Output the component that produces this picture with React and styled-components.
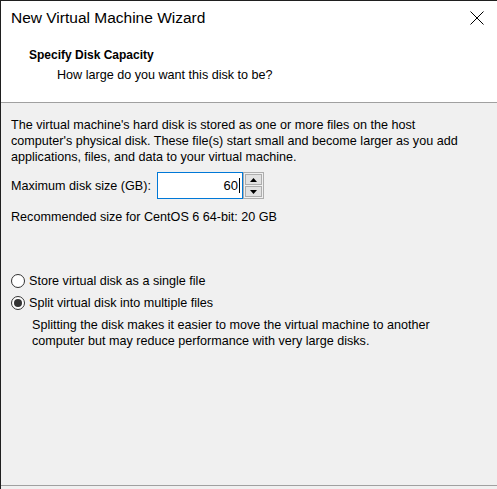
import React from "react";
import styled, { createGlobalStyle } from "styled-components";

const GlobalStyle = createGlobalStyle`
  html, body {
    margin: 0;
    padding: 0;
    background: #f0f0f0;
  }
  body {
    font-family: "Liberation Sans", Arial, sans-serif;
    font-size: 12.6px;
    color: #000;
  }
`;

const Window = styled.div`
  width: 497px;
  height: 489px;
  box-sizing: border-box;
  border-top: 1px solid #1f1f1f;
  border-left: 1px solid #1f1f1f;
  background: #f0f0f0;
  display: flex;
  flex-direction: column;
  overflow: hidden;
`;

const Top = styled.div`
  background: #ffffff;
  height: 101px;
  border-bottom: 1px solid #a0a0a0;
  display: flex;
  flex-direction: column;
`;

const TitleBar = styled.div`
  height: 34px;
  display: flex;
  align-items: center;
  justify-content: space-between;
  padding: 0 13px 0 10px;
`;

const Title = styled.span`
  font-size: 15.5px;
  color: #000;
`;

const Close = styled.svg`
  width: 14px;
  height: 14px;
  display: block;
`;

const Heading = styled.div`
  padding-left: 28px;
  margin-top: 12px;
  font-weight: bold;
  font-size: 12px;
  line-height: 16px;
`;

const SubHeading = styled.div`
  padding-left: 56px;
  margin-top: 4px;
  line-height: 16px;
`;

const Body = styled.div`
  flex: 1;
  padding: 14px 10px 0 10px;
  display: flex;
  flex-direction: column;
`;

const Paragraph = styled.p`
  margin: 0;
  line-height: 16px;
  white-space: nowrap;
  padding-left: ${(p) => p.$indent || 0}px;
  margin-top: ${(p) => p.$top || 0}px;
`;

const SizeRow = styled.div`
  display: flex;
  align-items: center;
  margin-top: 7px;
  height: 27px;
`;

const Label = styled.span`
  width: 146px;
  flex: none;
`;

const Input = styled.div`
  width: 86px;
  height: 27px;
  box-sizing: border-box;
  border: 1px solid #0078d7;
  background: #fff;
  display: flex;
  align-items: center;
  justify-content: flex-end;
  padding-right: 2px;
  font-size: 13px;
`;

const Caret = styled.span`
  width: 1px;
  height: 15px;
  background: #000;
  margin-left: 1px;
`;

const Spinner = styled.div`
  width: 21px;
  height: 27px;
  box-sizing: border-box;
  border: 1px solid #adadad;
  background: #f0f0f0;
  display: flex;
  flex-direction: column;
  padding: 1px;
  gap: 1px;
`;

const SpinButton = styled.div`
  flex: 1;
  background: #e1e1e1;
  border: 1px solid #adadad;
  display: flex;
  align-items: center;
  justify-content: center;
`;

const Radio = styled.label`
  display: flex;
  align-items: center;
  height: 16px;
  margin-top: ${(p) => p.$top}px;
  gap: 4px;
`;

const RadioCircle = styled.span`
  width: 14px;
  height: 14px;
  box-sizing: border-box;
  border-radius: 50%;
  border: 1px solid #333;
  background: #fff;
  display: flex;
  align-items: center;
  justify-content: center;
  flex: none;
  &::after {
    content: "";
    width: 8px;
    height: 8px;
    border-radius: 50%;
    background: #333;
    display: ${(p) => (p.$checked ? "block" : "none")};
  }
`;

const Footer = styled.div`
  height: 3px;
  border-top: 1px solid #a0a0a0;
  background: #f0f0f0;
`;

const Arrow = ({ up }) => (
  <svg width="7" height="4" viewBox="0 0 7 4">
    <polygon points={up ? "3.5,0 7,4 0,4" : "0,0 7,0 3.5,4"} fill="#000" />
  </svg>
);

export default function App() {
  return (
    <>
      <GlobalStyle />
      <Window>
        <Top>
          <TitleBar>
            <Title>New Virtual Machine Wizard</Title>
            <Close viewBox="0 0 14 14">
              <path d="M0.5 0.5 L13.5 13.5 M13.5 0.5 L0.5 13.5" stroke="#000" strokeWidth="1" fill="none" />
            </Close>
          </TitleBar>
          <Heading>Specify Disk Capacity</Heading>
          <SubHeading>How large do you want this disk to be?</SubHeading>
        </Top>
        <Body>
          <Paragraph>
            The virtual machine's hard disk is stored as one or more files on the host
            <br />
            computer's physical disk. These file(s) start small and become larger as you add
            <br />
            applications, files, and data to your virtual machine.
          </Paragraph>
          <SizeRow>
            <Label>Maximum disk size (GB):</Label>
            <Input>
              60
              <Caret />
            </Input>
            <Spinner>
              <SpinButton>
                <Arrow up />
              </SpinButton>
              <SpinButton>
                <Arrow />
              </SpinButton>
            </Spinner>
          </SizeRow>
          <Paragraph $top={10}>Recommended size for CentOS 6 64-bit: 20 GB</Paragraph>
          <Radio $top={48}>
            <RadioCircle />
            Store virtual disk as a single file
          </Radio>
          <Radio $top={6}>
            <RadioCircle $checked />
            Split virtual disk into multiple files
          </Radio>
          <Paragraph $indent={21} $top={6}>
            Splitting the disk makes it easier to move the virtual machine to another
            <br />
            computer but may reduce performance with very large disks.
          </Paragraph>
        </Body>
        <Footer />
      </Window>
    </>
  );
}
